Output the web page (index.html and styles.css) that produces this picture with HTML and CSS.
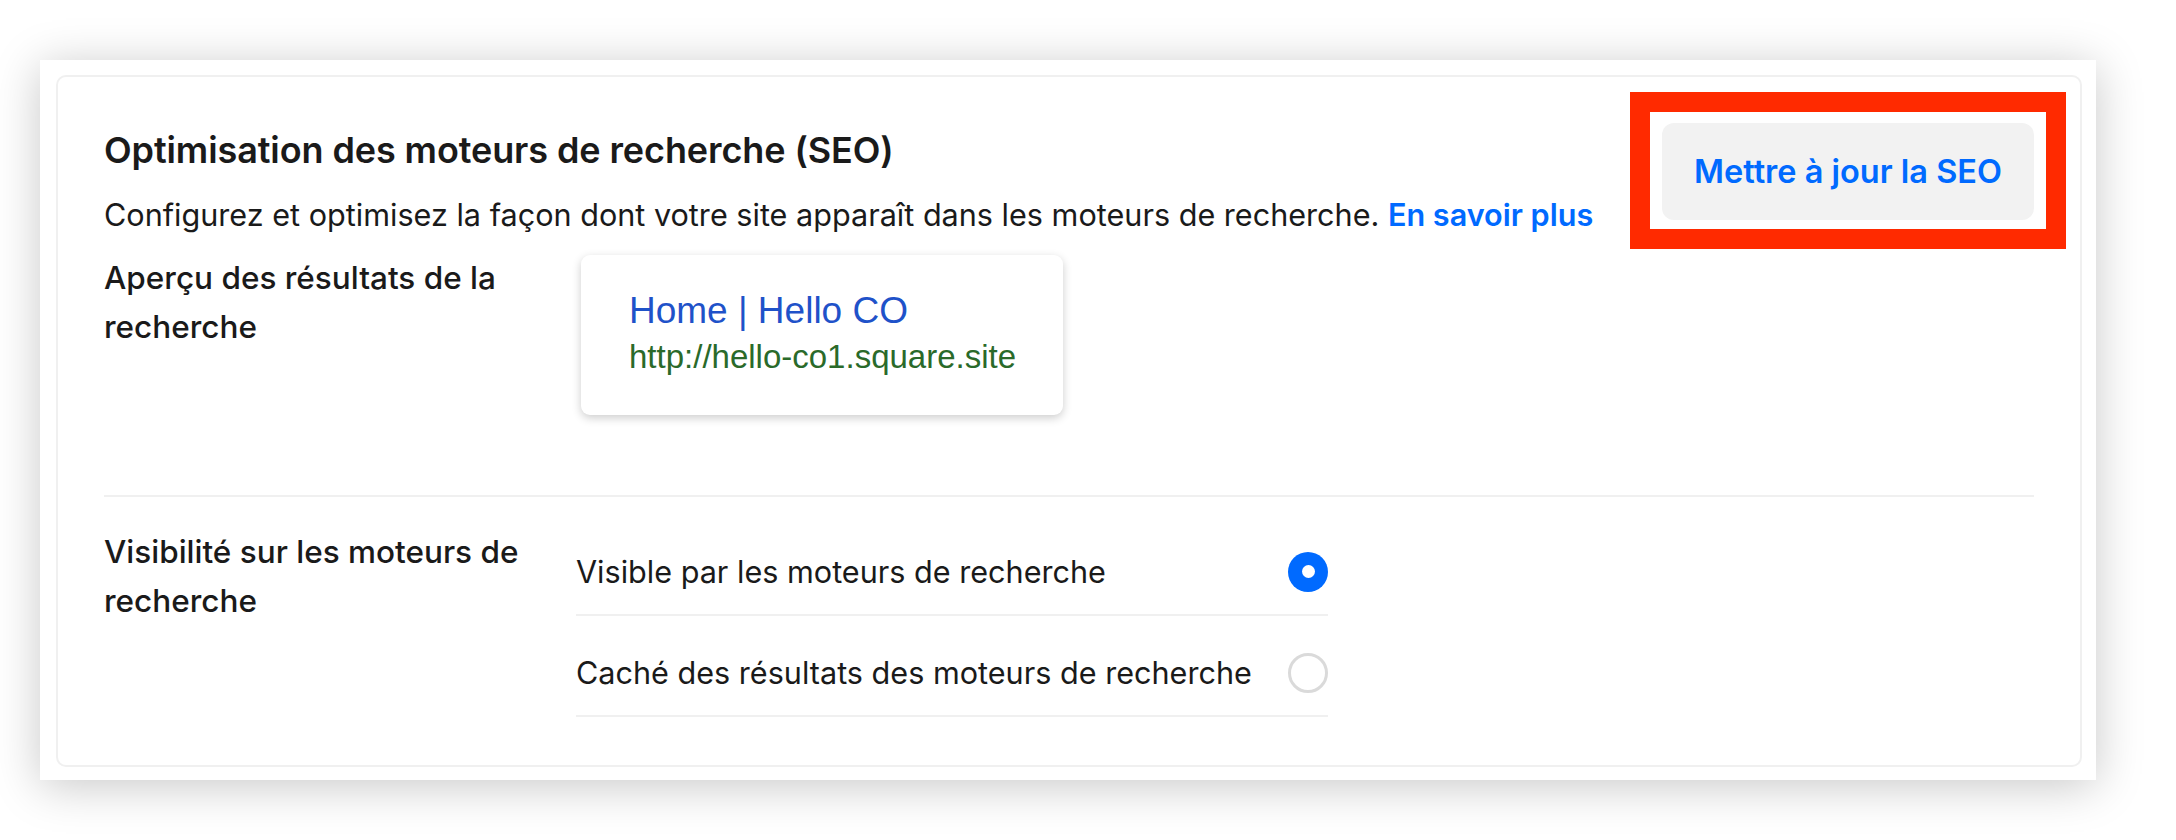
FILE: index.html
```html
<!DOCTYPE html>
<html lang="fr">
<head>
<meta charset="utf-8">
<title>SEO</title>
<link rel="stylesheet" href="styles.css">
</head>
<body>
<div class="page">
  <div class="panel">
    <div class="card">
      <div class="section section-top">
        <div class="header">
          <div class="intro">
            <h2 class="title">Optimisation des moteurs de recherche (SEO)</h2>
            <p class="desc">Configurez et optimisez la façon dont votre site apparaît dans les moteurs de recherche. <a class="link" href="#">En savoir plus</a></p>
          </div>
          <div class="btn-wrap">
            <button class="btn">Mettre à jour la SEO</button>
          </div>
        </div>
        <div class="row">
          <div class="label">Aperçu des résultats de la recherche</div>
          <div class="preview">
            <div class="preview-title">Home | Hello CO</div>
            <div class="preview-url">http://hello-co1.square.site</div>
          </div>
        </div>
      </div>
      <div class="section section-bottom">
        <div class="row">
          <div class="label label-vis">Visibilité sur les moteurs de recherche</div>
          <div class="options">
            <div class="option">
              <span class="option-text">Visible par les moteurs de recherche</span>
              <span class="radio radio-on"></span>
            </div>
            <div class="option">
              <span class="option-text">Caché des résultats des moteurs de recherche</span>
              <span class="radio"></span>
            </div>
          </div>
        </div>
      </div>
    </div>
  </div>
</div>
</body>
</html>
```
FILE: styles.css
```css
* { box-sizing: border-box; }
html, body { margin: 0; padding: 0; background: #ffffff; }
body {
  font-family: Inter, "Noto Sans", "Liberation Sans", sans-serif;
  color: #1a1a1a;
  width: 2176px;
  height: 840px;
  overflow: hidden;
}
.page {
  padding: 60px 80px 60px 40px;
}
.panel {
  width: 2056px;
  height: 720px;
  background: #ffffff;
  box-shadow: 0 6px 44px rgba(0, 0, 0, 0.22);
  padding: 15px 14px 13px 16px;
}
.card {
  height: 100%;
  border: 2px solid #f0f0f0;
  border-radius: 10px;
  padding: 46px 46px 47px 46px;
  display: flex;
  flex-direction: column;
}
.section-top {
  padding-bottom: 80px;
  border-bottom: 2px solid #f0f0f0;
}
.header {
  display: flex;
  justify-content: space-between;
  align-items: flex-start;
}
.title {
  margin: 0;
  font-size: 36px;
  line-height: 54px;
  font-weight: 600;
  color: #1a1a1a;
  letter-spacing: -0.1px;
}
.desc {
  margin: 13px 0 0 0;
  font-size: 30.6px;
  line-height: 49px;
  font-weight: 400;
}
.link {
  color: #006aff;
  font-weight: 600;
  text-decoration: none;
}
.btn-wrap {
  position: relative;
}
.btn-wrap::after {
  content: "";
  position: absolute;
  top: -31px;
  left: -32px;
  right: -32px;
  bottom: -29px;
  border: 20px solid #ff2a00;
  pointer-events: none;
}
.btn {
  display: block;
  width: 372px;
  height: 97px;
  border: none;
  border-radius: 12px;
  background: #f2f2f2;
  color: #006aff;
  font-family: Inter, "Noto Sans", "Liberation Sans", sans-serif;
  font-size: 32.5px;
  font-weight: 600;
  padding: 0;
}
.row {
  display: grid;
  grid-template-columns: 448px 1fr;
  column-gap: 24px;
  align-items: start;
}
.section-top .row {
  margin-top: 14px;
}
.label {
  font-size: 31.5px;
  line-height: 49px;
  font-weight: 500;
  width: 446px;
}
.preview {
  justify-self: start;
  margin: 2px 0 0 5px;
  width: 482px;
  height: 160px;
  background: #ffffff;
  border-radius: 9px;
  box-shadow: 0 3px 10px rgba(0, 0, 0, 0.2);
  padding: 34px 20px 0 48px;
  font-family: "Liberation Sans", Arial, sans-serif;
}
.preview-title {
  font-size: 37px;
  line-height: 44px;
  color: #1f52c9;
}
.preview-url {
  margin-top: 4px;
  font-size: 33px;
  line-height: 40px;
  color: #2a6a2a;
}
.section-bottom {
  padding-top: 18px;
}
.label-vis {
  margin-top: 12px;
}
.options {
  width: 752px;
}
.option {
  display: flex;
  justify-content: space-between;
  align-items: center;
  padding: 36.5px 0 22.5px 0;
  border-bottom: 2px solid #f0f0f0;
  font-size: 30.6px;
  line-height: 40px;
}
.radio {
  position: relative;
  flex: none;
  width: 40px;
  height: 40px;
  border-radius: 50%;
  border: 3px solid #dadada;
  background: #ffffff;
}
.radio-on {
  border: none;
  background: #006aff;
}
.radio-on::after {
  content: "";
  position: absolute;
  left: 13.5px;
  top: 13.5px;
  width: 13px;
  height: 13px;
  border-radius: 50%;
  background: #ffffff;
}
```
